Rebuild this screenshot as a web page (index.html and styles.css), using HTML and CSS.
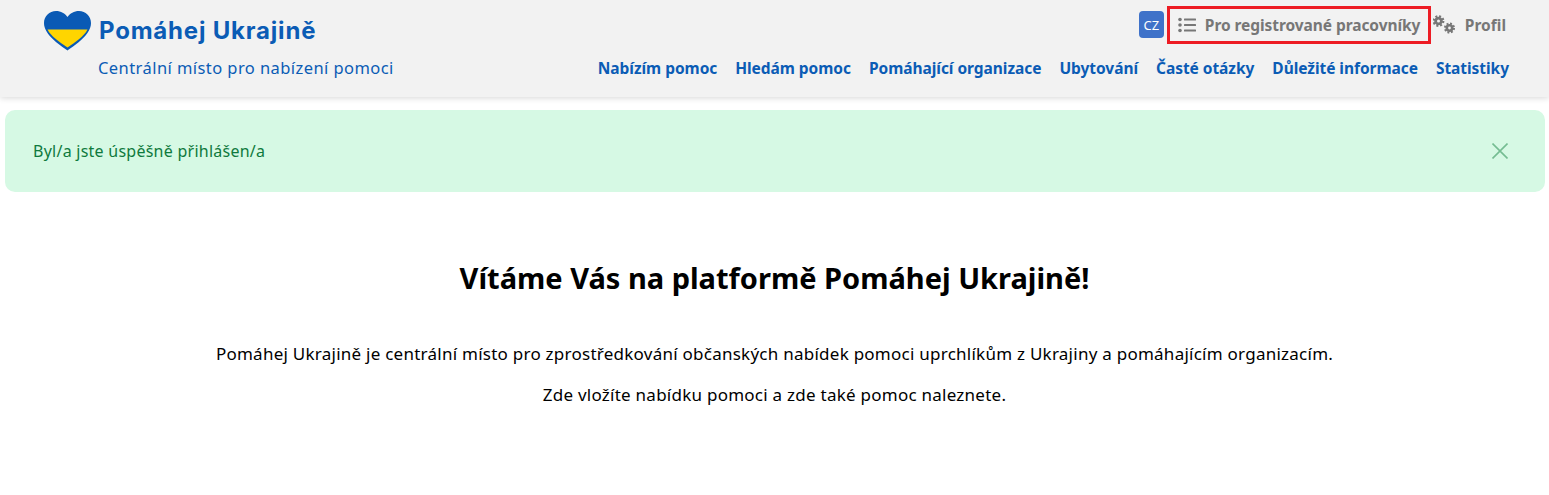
FILE: index.html
```html
<!DOCTYPE html>
<html lang="cs">
<head>
<meta charset="utf-8">
<title>Pomáhej Ukrajině</title>
<link rel="stylesheet" href="styles.css">
</head>
<body>
<header class="header">
  <div class="brand">
    <a class="logo" href="#">
      <svg class="heart" width="48" height="40" viewBox="0 0 48 40">
        <path d="M23.500 39.500 C15 33.500 0 23.500 0 12 C0 5 5.500 0 12 0 C17 0 21 2.500 23.500 6 C26 2.500 30 0 35 0 C41.500 0 47 5 47 12 C47 23.500 32 33.500 23.500 39.500 Z" fill="#0a5ab5"/>
        <path d="M3.500 18.500 H43.500 C40.500 25 31 31.500 23.500 36.500 C16 31.500 6.500 25 3.500 18.500 Z" fill="#ffd500"/>
      </svg>
      <span class="logo-text">Pomáhej Ukrajině</span>
    </a>
    <div class="tagline">Centrální místo pro nabízení pomoci</div>
  </div>
  <div class="menus">
    <div class="top-menu">
      <span class="lang">CZ</span>
      <a class="top-link boxed" href="#">
        <svg class="ico-list" width="18" height="16" viewBox="0 0 18 16">
          <circle cx="2" cy="2.500" r="1.800"/><circle cx="2" cy="8" r="1.800"/><circle cx="2" cy="13.500" r="1.800"/>
          <rect x="6" y="1.500" width="12" height="2" rx=".5"/><rect x="6" y="7" width="12" height="2" rx=".5"/><rect x="6" y="12.500" width="12" height="2" rx=".5"/>
        </svg>
        Pro registrované pracovníky
      </a>
      <a class="top-link profile" href="#">
        <svg class="ico-cogs" width="23" height="20" viewBox="0 0 23 20">
          <g fill="none" stroke="#777">
            <circle cx="5.500" cy="6" r="2.900" stroke-width="2.800"/>
            <circle cx="5.500" cy="6" r="4.800" stroke-width="2.200" stroke-dasharray="2 1.770"/>
            <circle cx="16.500" cy="13" r="2.700" stroke-width="2.600"/>
            <circle cx="16.500" cy="13" r="4.500" stroke-width="2" stroke-dasharray="1.900 1.630"/>
          </g>
        </svg>
        Profil
      </a>
    </div>
    <nav class="nav">
      <a href="#">Nabízím pomoc</a>
      <a href="#">Hledám pomoc</a>
      <a href="#">Pomáhající organizace</a>
      <a href="#">Ubytování</a>
      <a href="#">Časté otázky</a>
      <a href="#">Důležité informace</a>
      <a href="#">Statistiky</a>
    </nav>
  </div>
</header>
<div class="alert">
  <span>Byl/a jste úspěšně přihlášen/a</span>
  <svg class="close" width="16" height="16" viewBox="0 0 16 16"><path d="M.5 .5 L15.500 15.500 M15.500 .5 L.5 15.500" stroke="#75bd92" stroke-width="1.600" fill="none"/></svg>
</div>
<main class="main">
  <h1>Vítáme Vás na platformě Pomáhej Ukrajině!</h1>
  <p>Pomáhej Ukrajině je centrální místo pro zprostředkování občanských nabídek pomoci uprchlíkům z Ukrajiny a pomáhajícím organizacím.</p>
  <p>Zde vložíte nabídku pomoci a zde také pomoc naleznete.</p>
</main>
</body>
</html>
```
FILE: styles.css
```css
* { box-sizing: border-box; }
html, body { margin: 0; padding: 0; }
body {
  font-family: "Noto Sans", "Open Sans", sans-serif;
  color: #000;
  background: #fff;
  height: 495px;
  overflow: hidden;
}
a { text-decoration: none; }
.header {
  height: 97px;
  background: #f2f2f2;
  box-shadow: 0 1px 6px rgba(0,0,0,.16);
  display: flex;
  justify-content: space-between;
  padding: 0 40px 0 44px;
}
.brand { display: flex; flex-direction: column; }
.logo { display: flex; align-items: center; height: 40px; margin-top: 11px; }
.heart { margin-right: 7px; flex: none; }
.logo-text {
  font-family: Inter, sans-serif;
  font-weight: 700;
  font-size: 24px;
  letter-spacing: .8px;
  color: #0b5cb5;
  padding-bottom: 2px;
}
.tagline {
  margin: 6px 0 0 54px;
  font-size: 16.500px;
  line-height: 22px;
  color: #0b5cb5;
  letter-spacing: .43px;
  white-space: nowrap;
}
.menus { display: flex; flex-direction: column; align-items: flex-end; }
.top-menu { display: flex; align-items: center; margin-top: 6px; height: 38px; }
.lang {
  width: 25px; height: 27px;
  background: #3f72c9;
  color: #fff;
  border-radius: 4px;
  font-size: 13px;
  display: flex; align-items: center; justify-content: center;
  margin-right: 3px;
  align-self: flex-end;
  margin-bottom: 6px;
}
.top-link {
  display: flex; align-items: center;
  color: #777;
  font-weight: 700;
  font-size: 15.500px;
  white-space: nowrap;
}
.boxed {
  height: 38px;
  width: 264px;
  border: 3px solid #ed1c24;
  padding: 0 0 0 8px;
  letter-spacing: -.07px;
}
.ico-list { fill: #777; margin-right: 9px; flex: none; }
.profile { margin-left: 2px; margin-right: 3px; }
.ico-cogs { margin-right: 9px; flex: none; }
.nav { display: flex; gap: 18px; margin-top: 13px; }
.nav a {
  color: #0b5cb5;
  font-weight: 700;
  font-size: 15.500px;
  line-height: 22px;
  letter-spacing: -.045px;
  white-space: nowrap;
}
.alert {
  margin: 13px 4px 0 5px;
  height: 82px;
  background: #d6f9e4;
  border-radius: 10px;
  padding: 0 37px 0 28px;
  display: flex; align-items: center; justify-content: space-between;
  color: #0f7a3d;
  font-size: 16px;
  letter-spacing: .25px;
}
.main { text-align: center; }
h1 {
  margin: 66px 0 0;
  font-size: 29px;
  line-height: 40px;
  font-weight: 700;
}
p {
  margin: 0;
  font-size: 17px;
  line-height: 24px;
  letter-spacing: .25px;
}
h1 + p { margin-top: 44px; }
p + p { margin-top: 17px; }
```
